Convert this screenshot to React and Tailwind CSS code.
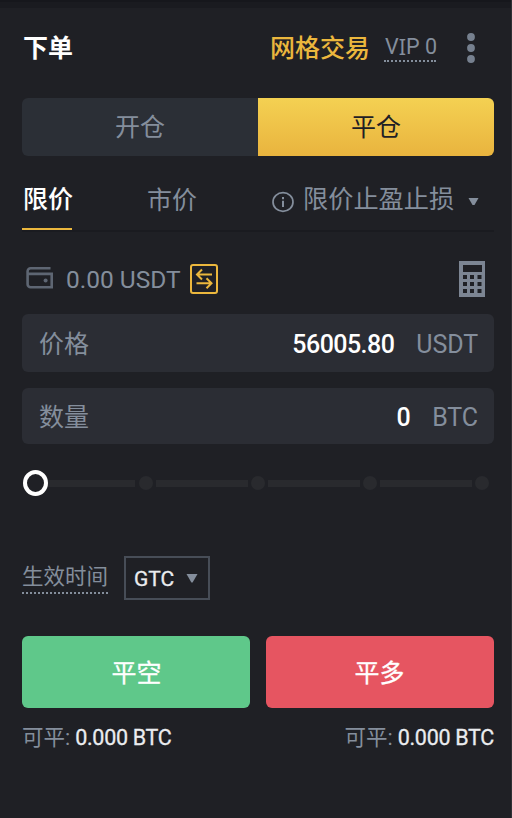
function DotsIcon() {
  return (
    <svg width="10" height="32" viewBox="0 0 10 32" fill="#76808f">
      <circle cx="5" cy="5" r="3.9" />
      <circle cx="5" cy="16" r="3.9" />
      <circle cx="5" cy="27" r="3.9" />
    </svg>
  );
}

function InfoIcon() {
  return (
    <svg className="mt-[4px]" width="22" height="22" viewBox="0 0 22 22" fill="none" stroke="#848e9c">
      <ellipse cx="11" cy="11" rx="10" ry="9.3" strokeWidth="1.7" />
      <path d="M11 6v2.2M11 9.7v6.3" strokeWidth="2" />
    </svg>
  );
}

function WalletIcon() {
  return (
    <svg className="-mt-0.5" width="28" height="24" viewBox="0 0 28 24" fill="none" stroke="#5e6673" strokeWidth="2.6">
      <path d="M24.5 2.2H4.6a3 3 0 0 0-3 3v13a3 3 0 0 0 3 3h21.1V7.900H1.600" />
      <circle cx="19.600" cy="14.400" r="2" fill="#5e6673" stroke="none" />
    </svg>
  );
}

function TransferIcon() {
  return (
    <svg width="28" height="30" viewBox="0 0 28 30" fill="none" stroke="#ebb73d" strokeWidth="2">
      <rect x="1" y="1" width="26" height="28" rx="2" />
      <path d="M22 10.500H7.500M12 5.500l-5 5 5 5M6.500 19.300H21M16.500 14.300l5 5-5 5" />
    </svg>
  );
}

function CalculatorIcon() {
  return (
    <svg width="26" height="36" viewBox="0 0 26 36" fill="#7c8593">
      <path
        fillRule="evenodd"
        d="M0 0h26v36H0ZM4 4v7h19V4ZM4 14v4h4v-4ZM11 14v4h4v-4ZM18.500 14v4h4v-4ZM4 21v4h4v-4ZM11 21v4h4v-4ZM18.500 21v4h4v-4ZM4 28v4h4v-4ZM11 28v4h4v-4ZM18.500 28v4h4v-4Z"
      />
    </svg>
  );
}

function Field({ label, value, unit, className }) {
  return (
    <div className={`flex items-center rounded-md bg-[#2b2d34] pl-[17px] pr-4 pt-0.5 ${className}`}>
      <span className="flex-1 text-[25px]">{label}</span>
      <span className="mr-[22px] text-[25px] font-medium tracking-[-0.550px] text-white">{value}</span>
      <span className="text-[25px] tracking-[-0.1px]">{unit}</span>
    </div>
  );
}

function Slider() {
  return (
    <div className="mt-[25px] flex h-7 items-center pl-px pr-[5px]">
      <div className="h-[26px] w-[25px] shrink-0 rounded-[50%] border-4 border-white" />
      <div className="h-[7px] w-[87px] shrink-0 bg-[#292a2e]" />
      <div className="w-px shrink-0" />
      {[0, 1, 2].map((step) => (
        <div key={step} className="flex w-[112px] shrink-0 items-center pl-[3px]">
          <div className="size-[14px] rounded-full bg-[#292a2e]" />
          <div className="ml-[3px] h-[7px] w-[92px] bg-[#292a2e]" />
        </div>
      ))}
      <div className="ml-[3px] size-[14px] shrink-0 rounded-full bg-[#292a2e]" />
    </div>
  );
}

function Available() {
  return (
    <div className="flex items-center gap-[5px]">
      <span className="text-[21.500px]">可平:</span>
      <span className="text-[21.500px] tracking-[-0.3px] text-[#eaecef] [-webkit-text-stroke:0.3px_#eaecef]">0.000 BTC</span>
    </div>
  );
}

export default function App() {
  return (
    <div className="h-[818px] w-[512px] border-r border-[#303136] bg-[#1f2025] font-[Roboto,'Noto_Sans_CJK_SC',sans-serif] leading-none whitespace-nowrap text-[#848e9c]">
      <div className="h-2 border-t-2 border-[#16171c] bg-[#1a1b20]" />
      <main className="flex flex-col pl-[22px] pr-[17px]">
        <header className="flex h-[90px] items-center pb-[11px]">
          <h1 className="flex-1 pl-px pt-px text-[25px] font-bold text-white">下单</h1>
          <a className="pt-px text-[25px] font-medium text-[#ebb73d]">网格交易</a>
          <div className="ml-[14px] flex h-[28px] w-[52px] items-center border-b-2 border-dotted border-[#848e9c] pl-px text-[21.500px]">
            V<span className="font-['Noto_Sans']">I</span>P 0
          </div>
          <div className="ml-[30px] mr-[18px]">
            <DotsIcon />
          </div>
        </header>

        <div className="flex h-[58px] overflow-hidden rounded-md text-[25px]">
          <button className="w-1/2 bg-[#2b2f36] pt-px">开仓</button>
          <button className="w-1/2 bg-linear-to-b from-[#f4d152] to-[#e9b43e] pt-px text-[#1f2025]">平仓</button>
        </div>

        <nav className="flex h-[76px] items-stretch border-b-2 border-[#1a1b20] text-[25px]">
          <div className="flex w-[50px] items-center border-b-2 border-[#ebb73d] pl-px pt-[15px] font-medium text-white">限价</div>
          <div className="ml-[75px] flex items-center pt-[14px]">市价</div>
          <div className="ml-[75px] flex items-center pt-[14px]">
            <InfoIcon />
            <span className="ml-[9px] text-[25.200px]">限价止盈止损</span>
            <svg className="ml-[14px] mt-1" width="11" height="8" viewBox="0 0 11 8" fill="#848e9c">
              <path d="M.5 0h10L6.500 7h-2Z" />
            </svg>
          </div>
        </nav>

        <div className="flex h-[82px] items-center pt-3">
          <div className="ml-1">
            <WalletIcon />
          </div>
          <span className="ml-3 w-[115px] pt-0.5 text-[24.500px]">0.00 USDT</span>
          <div className="ml-[9px]">
            <TransferIcon />
          </div>
          <div className="ml-auto mr-[9px]">
            <CalculatorIcon />
          </div>
        </div>

        <Field label="价格" value="56005.80" unit="USDT" className="h-[58px]" />
        <Field label="数量" value="0" unit="BTC" className="mt-4 h-[56px]" />
        <Slider />

        <div className="mt-[59px] flex h-11 items-center">
          <div className="flex h-8 w-[86px] items-center border-b-2 border-dotted border-[#848e9c] text-[21.500px]">
            生效时间
          </div>
          <div className="ml-4 flex h-11 w-[86px] items-center border-2 border-[#474d57] pl-2 pt-0.5 text-[21px] text-[#eaecef] [-webkit-text-stroke:0.3px_#eaecef]">
            GTC
            <svg className="-mt-0.5 ml-[12px]" width="12" height="9" viewBox="0 0 12 9" fill="#848e9c">
              <path d="M.5 0h11L6.600 8.500H5.400Z" />
            </svg>
          </div>
        </div>

        <div className="mt-9 grid h-[72px] grid-cols-2 gap-x-4 pr-px text-[25px] text-white [-webkit-text-stroke:0.3px_white]">
          <button className="w-[228px] rounded-md bg-[#5fc88a] pt-0.5 pl-px">平空</button>
          <button className="w-[228px] rounded-md bg-[#e65561] pt-0.5">平多</button>
        </div>
        <div className="mt-[19px] flex justify-between">
          <Available />
          <Available />
        </div>
      </main>
    </div>
  );
}
